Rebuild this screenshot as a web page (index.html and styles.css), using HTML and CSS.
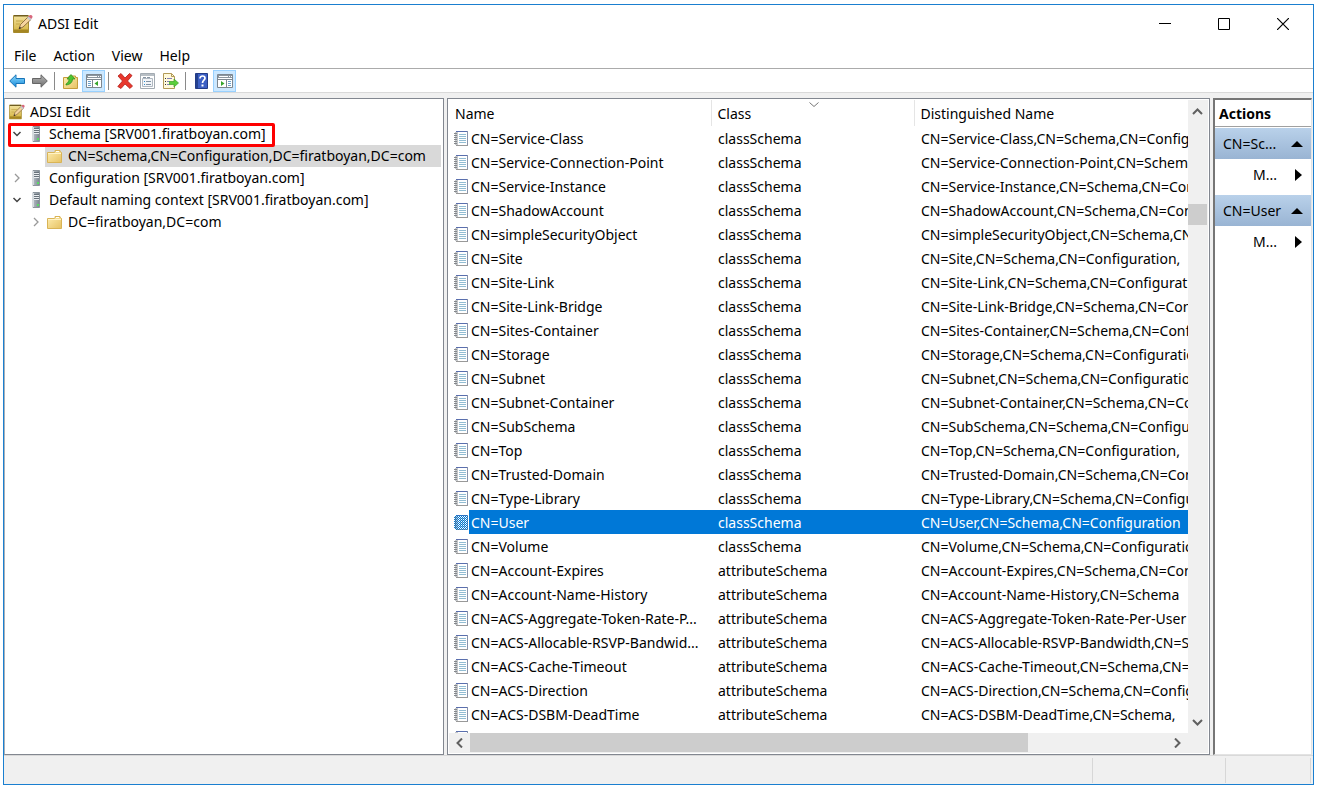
FILE: index.html
```html
<!DOCTYPE html>
<html lang="en">
<head>
<meta charset="utf-8">
<title>ADSI Edit</title>
<link rel="stylesheet" href="styles.css">
</head>
<body>
<svg class="sprite" aria-hidden="true">
  <defs>
    <linearGradient id="gold" x1="0" y1="0" x2="0" y2="1"><stop offset="0" stop-color="#f3e3a0"/><stop offset="1" stop-color="#d3b23c"/></linearGradient>
    <linearGradient id="fold" x1="0" y1="0" x2="1" y2="1"><stop offset="0" stop-color="#ffeeb0"/><stop offset="1" stop-color="#e6c263"/></linearGradient>
    <linearGradient id="blue" x1="0" y1="0" x2="0" y2="1"><stop offset="0" stop-color="#8fdcff"/><stop offset="1" stop-color="#1488d8"/></linearGradient>
    <linearGradient id="grey" x1="0" y1="0" x2="0" y2="1"><stop offset="0" stop-color="#b5b5b5"/><stop offset="1" stop-color="#6e6e6e"/></linearGradient>
    <linearGradient id="steel" x1="0" y1="0" x2="1" y2="0"><stop offset="0" stop-color="#b4bcc4"/><stop offset="1" stop-color="#7b858e"/></linearGradient>
    <pattern id="dots" width="2" height="2" patternUnits="userSpaceOnUse"><path fill="#0078d7" d="M0 0h1v1H0zM1 1h1v1H1z"/></pattern>
  </defs>
  <symbol id="app" viewBox="0 0 20 20">
    <path d="M.5 1.500h15v17H.5z" fill="url(#gold)" stroke="#a88e35"/>
    <path d="M1 1h14v1.500H1z" fill="#6f5d20"/>
    <path d="M3 7h7M3 10h4" stroke="#c5a84c"/>
    <path d="M1 15.500h14v3H1z" fill="#a58622"/>
    <path d="M6 15l1.500-4.500L15 3l3 2.500-8 7.500z" fill="#f5d5a0" stroke="#7a5a30" stroke-width=".8"/>
    <path d="M15 3l1.500-1.700q1-.8 2.200 0t.8 2L18 5.500z" fill="#d9677c"/>
    <path d="M14 4l1.500-1.500 3 2.500-1.500 1.500z" fill="#c5c9cf"/>
    <path d="M6 15l.7-2.200 1.500 1.300z" fill="#222"/>
  </symbol>
  <symbol id="server" viewBox="0 0 10 16">
    <path d="M2 .5h6.500v15H2z" fill="url(#steel)" stroke="#8b949c"/>
    <path d="M1 1h2v14H1z" fill="#d6dbdf"/>
    <path d="M3 3.500h5M3 5.500h5M3 7.500h5" stroke="#e9edf0"/>
    <path d="M3 2.500h5M3 4.500h5M3 6.500h5" stroke="#68727b"/>
    <path d="M6 12h2v2H6z" fill="#58dc63"/>
  </symbol>
  <symbol id="folder" viewBox="0 0 15 13">
    <path d="M.5 2.500v10h14v-10l-1-1H13v-1H8v1L7.500 2.500z" fill="url(#fold)" stroke="#d9b456"/>
    <path d="M9 1.500h3" stroke="#fff"/><path d="M1 3.500h13" stroke="#fff3c8"/>
  </symbol>
  <symbol id="note" viewBox="0 0 14 15">
    <path d="M2.500.5h11v14h-11z" fill="#fff" stroke="#a3a9b2"/>
    <path d="M2 .5h12" stroke="#5a6fae"/><path d="M13.500 0v15" stroke="#8792ab"/><path d="M2 14.500h12" stroke="#999"/>
    <path d="M1 1h3v13H1z" fill="#c3c6c9"/>
    <path d="M0 2.500h3M0 4.500h3M0 6.500h3M0 8.500h3M0 10.500h3M0 12.500h3" stroke="#85898d"/>
    <path d="M5 3.500h7M5 5.500h7M5 7.500h7M5 9.500h7M5 11.500h7" stroke="#92bdd3"/>
  </symbol>
  <symbol id="noteSelected" viewBox="0 0 14 15"><use href="#note"/><path d="M0 1h1V0h13v15H1v-1H0z" fill="url(#dots)"/></symbol>
  <symbol id="down" viewBox="0 0 10 10"><path d="M1.500 3L5 6.500 8.500 3" fill="none" stroke="#444" stroke-width="1.500"/></symbol>
  <symbol id="right" viewBox="0 0 10 10"><path d="M3 1l4 4-4 4" fill="none" stroke="#999" stroke-width="1.300"/></symbol>
  <symbol id="pane" viewBox="0 0 16 14">
    <path d="M.5.5h15v13H.5z" fill="#fff" stroke="#7d8790"/><path d="M1 1h14v3H1z" fill="#8c969f"/>
    <path d="M2 2.500h9M12 2.500h1M14 2.500h1" stroke="#fff"/><path d="M0 5.500h16" stroke="#7d8790"/>
  </symbol>
</svg>

<main class="window">
  <header class="titlebar">
    <svg class="app-icon"><use href="#app"/></svg>
    <h1>ADSI Edit</h1>
    <div class="captions">
      <button type="button" aria-label="Minimize"><svg viewBox="0 0 12 12"><path d="M0 5.500h12" stroke="#000"/></svg></button>
      <button type="button" aria-label="Maximize"><svg viewBox="0 0 12 12"><path d="M.5.5h11v11H.5z" fill="none" stroke="#000"/></svg></button>
      <button type="button" aria-label="Close"><svg viewBox="0 0 12 12"><path d="M0 0l12 12M12 0L0 12" stroke="#000" stroke-width="1.200"/></svg></button>
    </div>
  </header>
  <nav class="menubar">
    <button type="button">File</button><button type="button">Action</button><button type="button">View</button><button type="button">Help</button>
  </nav>
  <div class="toolbar">
    <button type="button" aria-label="Back"><svg width="16" height="14" viewBox="0 0 16 14"><path d="M.7 7L7 .8v3.700h8.500v5H7v3.700z" fill="url(#blue)" stroke="#1874b8"/></svg></button>
    <button type="button" aria-label="Forward"><svg width="16" height="14" viewBox="0 0 16 14"><path d="M15.300 7L9 .8v3.700H.5v5H9v3.700z" fill="url(#grey)" stroke="#666"/></svg></button>
    <span class="sep"></span>
    <button type="button" aria-label="Up one level"><svg width="15" height="16" viewBox="0 0 15 16"><path d="M.5 4.500v11h14v-11h-2v-1.500h-6l-1 1.500z" fill="url(#fold)" stroke="#c69d3c"/><path d="M3 11c2-1 3-3 3-5H4l4-4.500L12 6H9.500c0 3-2 5.500-6.500 6z" fill="#4dc431" stroke="#2c8a1b" stroke-width=".7"/></svg></button>
    <button type="button" class="on" aria-label="Show or hide console tree"><svg width="16" height="14" viewBox="0 0 16 14"><use href="#pane"/><path d="M6.500 6v8" stroke="#7d8790"/><path d="M2 7.500h3M2 9.500h3M2 11.500h3" stroke="#6b9fc9"/><path d="M12 7v5L8.500 9.500z" fill="#36a52b"/></svg></button>
    <span class="sep"></span>
    <button type="button" aria-label="Delete"><svg width="16" height="16" viewBox="0 0 16 16"><path d="M1 3l3-2.500L8 5l4.500-4.500L15 2.500 10.500 8 15.500 13 13 15.500 8 11l-4 4.500L.8 13.500 5.500 8z" fill="#e8372c" stroke="#b3201a" stroke-width=".8"/></svg></button>
    <button type="button" aria-label="Properties"><svg width="15" height="16" viewBox="0 0 15 16"><path d="M.5.5h14v15H.5z" fill="#fff" stroke="#a3abb2"/><path d="M1 2h13" stroke="#b8bfc5" stroke-width="2"/><path d="M2.500 5.500h10v8h-10z" fill="#f2f5f8" stroke="#b0b8c1"/><path d="M3 4.500h3M7 4.500h3" stroke="#8795a3"/><path d="M4 8.500h1M4 11.500h1" stroke="#2c8ccc"/><path d="M6 8.500h5M6 11.500h5" stroke="#8092a4"/></svg></button>
    <button type="button" aria-label="Export list"><svg width="16" height="16" viewBox="0 0 16 16"><path d="M.5.5h8l3 3v12H.5z" fill="#fff9dc" stroke="#b39b58"/><path d="M8.500.5v3h3" fill="none" stroke="#b39b58"/><path d="M2 5.500h1M2 8.500h1M2 11.500h1" stroke="#333"/><path d="M4 5.500h5M4 8.500h3M4 11.500h3" stroke="#8280b8"/><path d="M6.500 8.500H11V6l4.500 4-4.500 4v-2.500H6.500z" fill="#5bcf3b" stroke="#3da227" stroke-width=".7"/></svg></button>
    <span class="sep"></span>
    <button type="button" aria-label="Help"><svg width="13" height="16" viewBox="0 0 13 16"><path d="M.5.5h12v15H.5z" fill="#3c5fc4" stroke="#233b87"/><path d="M1 1h2v14H1z" fill="#24418f"/><path d="M5 5.500C5 2 10 2.500 10 5.200c0 2-2.500 2-2.500 4.800" fill="none" stroke="#fff" stroke-width="1.700"/><path d="M6.500 11.500h2v2h-2z" fill="#fff"/></svg></button>
    <button type="button" class="on" aria-label="Show or hide action pane"><svg width="16" height="14" viewBox="0 0 16 14"><use href="#pane"/><path d="M9.500 6v8" stroke="#7d8790"/><path d="M11 7.500h3M11 9.500h3M11 11.500h3" stroke="#6b9fc9"/><path d="M4 7v5l3.500-2.500z" fill="#36a52b"/></svg></button>
  </div>

  <div class="workspace">
    <section class="tree" aria-label="Console tree">
      <div class="node root"><svg class="app-small"><use href="#app"/></svg><span>ADSI Edit</span></div>
      <div class="node marked"><svg class="chev"><use href="#down"/></svg><svg class="server"><use href="#server"/></svg><span>Schema [SRV001.firatboyan.com]</span></div>
      <div class="node leaf"><span class="chosen"><svg class="folder"><use href="#folder"/></svg><span>CN=Schema,CN=Configuration,DC=firatboyan,DC=com</span></span></div>
      <div class="node"><svg class="chev"><use href="#right"/></svg><svg class="server"><use href="#server"/></svg><span>Configuration [SRV001.firatboyan.com]</span></div>
      <div class="node"><svg class="chev"><use href="#down"/></svg><svg class="server"><use href="#server"/></svg><span>Default naming context [SRV001.firatboyan.com]</span></div>
      <div class="node sub"><svg class="chev"><use href="#right"/></svg><svg class="folder"><use href="#folder"/></svg><span>DC=firatboyan,DC=com</span></div>
    </section>

    <section class="list">
      <div class="rows">
        <table>
          <colgroup><col class="c-name"><col class="c-class"><col></colgroup>
          <thead><tr><th>Name</th><th class="sorted">Class<svg class="sort" viewBox="0 0 10 5"><path d="M.5.500L5 4.500 9.500.5" fill="none" stroke="#777"/></svg></th><th>Distinguished Name</th></tr></thead>
          <tbody>
            <tr><td><svg><use href="#note"/></svg>CN=Service-Class</td><td>classSchema</td><td>CN=Service-Class,CN=Schema,CN=Configuration</td></tr>
            <tr><td><svg><use href="#note"/></svg>CN=Service-Connection-Point</td><td>classSchema</td><td>CN=Service-Connection-Point,CN=Schema</td></tr>
            <tr><td><svg><use href="#note"/></svg>CN=Service-Instance</td><td>classSchema</td><td>CN=Service-Instance,CN=Schema,CN=Configuration</td></tr>
            <tr><td><svg><use href="#note"/></svg>CN=ShadowAccount</td><td>classSchema</td><td>CN=ShadowAccount,CN=Schema,CN=Configuration</td></tr>
            <tr><td><svg><use href="#note"/></svg>CN=simpleSecurityObject</td><td>classSchema</td><td>CN=simpleSecurityObject,CN=Schema,CN=Configuration</td></tr>
            <tr><td><svg><use href="#note"/></svg>CN=Site</td><td>classSchema</td><td>CN=Site,CN=Schema,CN=Configuration,</td></tr>
            <tr><td><svg><use href="#note"/></svg>CN=Site-Link</td><td>classSchema</td><td>CN=Site-Link,CN=Schema,CN=Configuration</td></tr>
            <tr><td><svg><use href="#note"/></svg>CN=Site-Link-Bridge</td><td>classSchema</td><td>CN=Site-Link-Bridge,CN=Schema,CN=Configuration</td></tr>
            <tr><td><svg><use href="#note"/></svg>CN=Sites-Container</td><td>classSchema</td><td>CN=Sites-Container,CN=Schema,CN=Configuration</td></tr>
            <tr><td><svg><use href="#note"/></svg>CN=Storage</td><td>classSchema</td><td>CN=Storage,CN=Schema,CN=Configuration</td></tr>
            <tr><td><svg><use href="#note"/></svg>CN=Subnet</td><td>classSchema</td><td>CN=Subnet,CN=Schema,CN=Configuration</td></tr>
            <tr><td><svg><use href="#note"/></svg>CN=Subnet-Container</td><td>classSchema</td><td>CN=Subnet-Container,CN=Schema,CN=Configuration</td></tr>
            <tr><td><svg><use href="#note"/></svg>CN=SubSchema</td><td>classSchema</td><td>CN=SubSchema,CN=Schema,CN=Configuration</td></tr>
            <tr><td><svg><use href="#note"/></svg>CN=Top</td><td>classSchema</td><td>CN=Top,CN=Schema,CN=Configuration,</td></tr>
            <tr><td><svg><use href="#note"/></svg>CN=Trusted-Domain</td><td>classSchema</td><td>CN=Trusted-Domain,CN=Schema,CN=Configuration</td></tr>
            <tr><td><svg><use href="#note"/></svg>CN=Type-Library</td><td>classSchema</td><td>CN=Type-Library,CN=Schema,CN=Configuration</td></tr>
            <tr class="selected"><td><svg><use href="#noteSelected"/></svg>CN=User</td><td>classSchema</td><td>CN=User,CN=Schema,CN=Configuration</td></tr>
            <tr><td><svg><use href="#note"/></svg>CN=Volume</td><td>classSchema</td><td>CN=Volume,CN=Schema,CN=Configuration</td></tr>
            <tr><td><svg><use href="#note"/></svg>CN=Account-Expires</td><td>attributeSchema</td><td>CN=Account-Expires,CN=Schema,CN=Configuration</td></tr>
            <tr><td><svg><use href="#note"/></svg>CN=Account-Name-History</td><td>attributeSchema</td><td>CN=Account-Name-History,CN=Schema</td></tr>
            <tr><td><svg><use href="#note"/></svg>CN=ACS-Aggregate-Token-Rate-P...</td><td>attributeSchema</td><td>CN=ACS-Aggregate-Token-Rate-Per-User</td></tr>
            <tr><td><svg><use href="#note"/></svg>CN=ACS-Allocable-RSVP-Bandwid...</td><td>attributeSchema</td><td>CN=ACS-Allocable-RSVP-Bandwidth,CN=Schema</td></tr>
            <tr><td><svg><use href="#note"/></svg>CN=ACS-Cache-Timeout</td><td>attributeSchema</td><td>CN=ACS-Cache-Timeout,CN=Schema,CN=Configuration</td></tr>
            <tr><td><svg><use href="#note"/></svg>CN=ACS-Direction</td><td>attributeSchema</td><td>CN=ACS-Direction,CN=Schema,CN=Configuration</td></tr>
            <tr><td><svg><use href="#note"/></svg>CN=ACS-DSBM-DeadTime</td><td>attributeSchema</td><td>CN=ACS-DSBM-DeadTime,CN=Schema,</td></tr>
            <tr><td><svg><use href="#note"/></svg></td><td></td><td></td></tr>
          </tbody>
        </table>
      </div>
      <div class="vscroll">
        <button type="button" aria-label="Scroll up"><svg width="11" height="7" viewBox="0 0 11 7"><path d="M1 6l4.500-4.500L10 6" fill="none" stroke="#606060" stroke-width="2"/></svg></button>
        <div class="track"><div class="thumb"></div></div>
        <button type="button" aria-label="Scroll down"><svg width="11" height="7" viewBox="0 0 11 7"><path d="M1 1l4.500 4.500L10 1" fill="none" stroke="#606060" stroke-width="2"/></svg></button>
      </div>
      <div class="hscroll">
        <button type="button" aria-label="Scroll left"><svg width="7" height="10" viewBox="0 0 7 10"><path d="M6 .5L1.500 5 6 9.500" fill="none" stroke="#606060" stroke-width="2"/></svg></button>
        <div class="track"><div class="thumb"></div></div>
        <button type="button" aria-label="Scroll right"><svg width="7" height="10" viewBox="0 0 7 10"><path d="M1 .5L5.500 5 1 9.500" fill="none" stroke="#606060" stroke-width="2"/></svg></button>
      </div>
    </section>

    <aside class="actions">
      <h2>Actions</h2>
      <button type="button" class="group"><span>CN=Sc...</span><svg width="12" height="6" viewBox="0 0 12 6"><path d="M6 0l6 6H0z"/></svg></button>
      <button type="button" class="more"><span>M...</span><svg width="7" height="12" viewBox="0 0 7 12"><path d="M0 0l7 6-7 6z"/></svg></button>
      <button type="button" class="group"><span>CN=User</span><svg width="12" height="6" viewBox="0 0 12 6"><path d="M6 0l6 6H0z"/></svg></button>
      <button type="button" class="more"><span>M...</span><svg width="7" height="12" viewBox="0 0 7 12"><path d="M0 0l7 6-7 6z"/></svg></button>
    </aside>
  </div>
  <footer class="statusbar"><span class="wide"></span><span class="mid"></span><span class="end"></span></footer>
</main>
</body>
</html>
```
FILE: styles.css
```css
*, *::before, *::after { box-sizing: border-box; }
body {
  margin: 0;
  padding: 4px 4px 3px 3px;
  height: 100vh;
  background: #fff;
  color: #000;
  font: 14px/22px "Noto Sans", "Open Sans", sans-serif;
}
svg { display: block; flex: none; }
.sprite { position: absolute; width: 0; height: 0; }
button { border: 0; padding: 0; margin: 0; background: none; font: inherit; color: inherit; }
.window {
  display: flex;
  flex-direction: column;
  height: 100%;
  border: 1px solid #1a7fd0;
  background: #f0f0f0;
}
.titlebar { display: flex; align-items: center; height: 38px; padding: 0 1px 0 9px; background: #fff; }
.app-icon { width: 20px; height: 20px; }
h1 { flex: 1; margin: 0 0 0 5px; font: inherit; }
.captions { display: flex; }
.captions button { width: 59px; height: 38px; display: grid; place-items: center; }
.captions svg { width: 12px; height: 12px; }
.menubar { display: flex; gap: 17px; height: 26px; padding: 0 10px; background: #fff; border-bottom: 1px solid #ababab; }
.toolbar { display: flex; align-items: center; height: 24px; padding: 1px 0 0 1px; background: #fff; border-bottom: 1px solid #d9d9d9; }
.toolbar button { display: grid; place-items: center; width: 23px; height: 22px; }
.toolbar .on { background: #cce8ff; border: 1px solid #99d1ff; }
.sep { width: 1px; height: 18px; margin: 0 4px 0 3px; background: #8a8a8a; }

.workspace { flex: 1; min-height: 0; display: flex; gap: 3px; padding: 5px 1px 0 0; }
.tree { width: 440px; padding: 2px 0; background: #fff; border: 1px solid #828790; border-left-color: #a8b0b8; overflow: hidden; white-space: nowrap; }
.node { display: flex; align-items: center; height: 22px; padding-left: 7px; }
.root { padding-left: 4px; }
.app-small { width: 16px; height: 16px; margin-right: 5px; }
.chev { width: 10px; height: 10px; }
.server { width: 10px; height: 16px; margin: 0 8px 0 9px; }
.folder { width: 15px; height: 13px; margin-right: 6px; }
.sub { padding-left: 26px; }
.sub .folder { margin-left: 6px; }
.leaf { padding: 0 2px 0 40px; }
.chosen { flex: 1; display: flex; align-items: center; height: 22px; padding: 0 4px 0 2px; background: #d9d9d9; }
.marked { position: relative; }
.marked::after { content: ""; position: absolute; left: 3px; top: 0; width: 267px; height: 24px; border: 3px solid #fe0000; border-radius: 2px; }

.list {
  flex: 1;
  min-width: 0;
  display: grid;
  grid-template-columns: minmax(0, 1fr) 19px;
  grid-template-rows: minmax(0, 1fr) 19px;
  padding: 1px 2px 2px 1px;
  background: #f0f0f0;
  border: 1px solid #828790;
  box-shadow: inset 0 0 0 1px #fff;
}
.rows { overflow: hidden; background: #fff; }
table { width: 100%; table-layout: fixed; border-collapse: collapse; }
.c-name { width: 262px; }
.c-class { width: 203px; }
th { height: 26px; padding: 1px 6px 0; text-align: left; font-weight: 400; border-right: 1px solid #e5e5e5; }
th:last-child { border-right: 0; }
.sorted { position: relative; }
.sort { position: absolute; left: 97px; top: 2px; width: 10px; height: 5px; }
td { height: 24px; padding: 2px 0 0 7px; line-height: 22px; overflow: hidden; white-space: nowrap; }
td:first-child { padding-left: 5px; }
td svg { display: inline-block; width: 14px; height: 15px; margin-right: 3px; vertical-align: -2px; }
.selected td { background: #0078d7; color: #fff; }
.selected td:first-child { background: linear-gradient(to right, #fff 20px, #0078d7 20px); }
.vscroll { display: flex; flex-direction: column; background: #f0f0f0; }
.hscroll { display: flex; grid-column: 1 / -1; padding-right: 19px; background: #f0f0f0; }
.vscroll button, .hscroll button { display: grid; place-items: center; width: 19px; height: 22px; }
.hscroll button { width: 21px; height: 19px; }
.track { flex: 1; display: flex; }
.vscroll .track { flex-direction: column; }
.vscroll .track::before { content: ""; height: 14%; }
.vscroll .thumb { height: 21px; background: #cdcdcd; }
.hscroll .thumb { width: 80%; height: 19px; background: #cdcdcd; }

.actions { width: 99px; background: #fff; border: 2px solid #767676; border-right: 1px solid #e3e3e3; border-bottom: 1px solid #e3e3e3; }
h2 { margin: 0 0 1px; padding: 2px 4px; height: 27px; font-size: 14px; line-height: 24px; font-weight: 700; border-bottom: 1px solid #a0a0a0; }
.group, .more { display: flex; align-items: center; justify-content: space-between; width: 100%; padding: 0 8px; }
.group { height: 31px; background: linear-gradient(#b9d1ea, #99b4d3); }
.more { height: 32px; margin-bottom: 4px; padding: 0 9px 0 38px; }

.statusbar { display: flex; height: 29px; padding: 2px 2px 1px 0; border-top: 1px solid #d9d9d9; }
.statusbar span { border-right: 1px solid #d7d7d7; }
.wide { flex: 1; }
.mid { width: 133px; }
.end { width: 85px; }
```
